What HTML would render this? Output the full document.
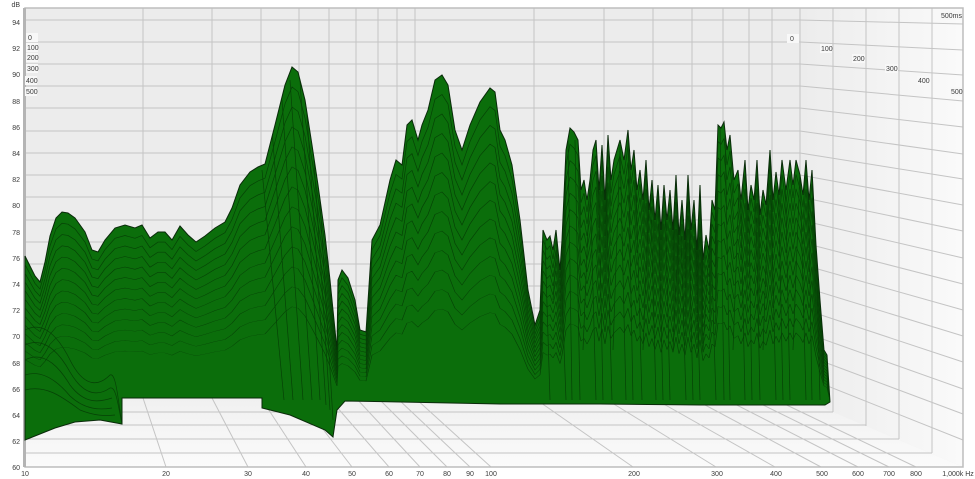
<!DOCTYPE html>
<html><head><meta charset="utf-8"><style>
html,body{margin:0;padding:0;background:#fff;width:975px;height:479px;overflow:hidden}
svg{display:block}
text{font-family:"Liberation Sans",sans-serif;font-size:7px;fill:#3a3a3a}
</style></head><body>
<svg width="975" height="479" viewBox="0 0 975 479" xmlns="http://www.w3.org/2000/svg">
<defs>
<linearGradient id="rw" x1="0" x2="1" y1="0" y2="0"><stop offset="0" stop-color="#ececec"/><stop offset="1" stop-color="#fafafa"/></linearGradient>
<linearGradient id="fl" x1="0" x2="0" y1="0" y2="1"><stop offset="0" stop-color="#f0f0f0"/><stop offset="1" stop-color="#fbfbfb"/></linearGradient>
<path id="top" d="M25,256 L30,266 35,276 40,282 45,262 50,236 56,218 62,212 68,213 75,218 85,232 92,250 98,252 105,240 115,228 125,225 135,228 142,225 150,238 158,232 165,232 172,240 180,226 188,235 196,242 205,236 215,228 225,222 232,208 240,185 250,172 258,167 265,164 275,125 285,85 292,67 298,72 305,100 312,145 318,185 325,235 330,280 335,330 337,350 338,280 342,270 348,278 355,300 360,330 366,332 372,240 380,225 390,180 396,160 402,165 407,125 412,120 418,140 422,125 428,110 435,80 442,75 448,85 455,130 462,150 470,125 480,102 490,88 495,92 500,130 505,140 512,165 520,220 528,290 535,325 540,310 543,230 547,240 550,236 553,250 556,230 560,270 562,240 566,150 570,128 574,132 578,140 581,190 584,180 587,200 590,180 593,150 596,140 599,190 602,145 605,200 608,135 611,180 614,160 617,150 620,140 624,160 628,130 631,170 634,150 637,190 640,170 643,200 646,160 649,210 652,180 655,220 658,185 661,230 664,185 667,220 670,190 673,230 676,175 679,235 682,200 685,240 688,175 691,230 694,200 697,250 700,185 703,260 706,235 709,250 712,200 715,210 718,125 721,128 724,122 727,150 730,135 734,180 738,170 741,200 745,160 748,210 751,185 754,200 757,160 760,215 763,190 766,205 770,150 773,200 776,172 779,195 782,160 786,190 790,160 793,185 796,160 800,175 803,195 806,160 809,200 812,170 816,245 820,300 824,350 827,355 830,402"/>
<clipPath id="gc"><path id="shape" d="M25,256 L30,266 35,276 40,282 45,262 50,236 56,218 62,212 68,213 75,218 85,232 92,250 98,252 105,240 115,228 125,225 135,228 142,225 150,238 158,232 165,232 172,240 180,226 188,235 196,242 205,236 215,228 225,222 232,208 240,185 250,172 258,167 265,164 275,125 285,85 292,67 298,72 305,100 312,145 318,185 325,235 330,280 335,330 337,350 338,280 342,270 348,278 355,300 360,330 366,332 372,240 380,225 390,180 396,160 402,165 407,125 412,120 418,140 422,125 428,110 435,80 442,75 448,85 455,130 462,150 470,125 480,102 490,88 495,92 500,130 505,140 512,165 520,220 528,290 535,325 540,310 543,230 547,240 550,236 553,250 556,230 560,270 562,240 566,150 570,128 574,132 578,140 581,190 584,180 587,200 590,180 593,150 596,140 599,190 602,145 605,200 608,135 611,180 614,160 617,150 620,140 624,160 628,130 631,170 634,150 637,190 640,170 643,200 646,160 649,210 652,180 655,220 658,185 661,230 664,185 667,220 670,190 673,230 676,175 679,235 682,200 685,240 688,175 691,230 694,200 697,250 700,185 703,260 706,235 709,250 712,200 715,210 718,125 721,128 724,122 727,150 730,135 734,180 738,170 741,200 745,160 748,210 751,185 754,200 757,160 760,215 763,190 766,205 770,150 773,200 776,172 779,195 782,160 786,190 790,160 793,185 796,160 800,175 803,195 806,160 809,200 812,170 816,245 820,300 824,350 827,355 830,402 825,405 700,405 600,404 540,404 500,404 400,402 345,401 337,410 333,437 325,430 290,415 262,408 262,398 215,398 160,398 122,398 122,424 100,420 75,422 55,428 40,434 25,440 Z"/></clipPath>
</defs>
<rect x="25" y="8" width="938" height="459" fill="#ececec"/>
<polygon points="800,8 963,8 963,467 800,398" fill="url(#rw)"/>
<polygon points="25,398 800,398 963,467 25,467" fill="url(#fl)"/>
<g stroke="#c4c4c4" stroke-width="1" fill="none">
<path d="M25,20H800M25,42H800M25,64H800M25,86H800M25,108H800M25,131H800M25,153H800M25,175H800M25,197H800M25,220H800M25,242H800M25,264H800M25,286H800M25,308H800M25,331H800M25,353H800M25,375H800M25,398H800"/>
<path d="M143,8V398M212,8V398M261,8V398M299,8V398M329,8V398M356,8V398M378,8V398M397,8V398M415,8V398M534,8V398M604,8V398M653,8V398M692,8V398M723,8V398M749,8V398M772,8V398M800,8V398"/>
<path d="M833,8V412M866,8V426M899,8V439M932,8V453"/>
<path d="M800,20L963,24M800,42L963,50M800,64L963,75M800,86L963,101M800,108L963,127M800,131L963,154M800,153L963,179M800,175L963,205M800,197L963,231M800,220L963,258M800,242L963,284M800,264L963,310M800,286L963,336M800,308L963,362M800,331L963,389M800,353L963,414M800,375L963,440"/>
<path d="M25,412H833M25,425H866M25,439H899M25,453H932"/>
<path d="M143,398L166,467M212,398L248,467M261,398L306,467M299,398L352,467M329,398L389,467M356,398L420,467M378,398L447,467M397,398L470,467M415,398L491,467M534,398L633,467M604,398L716,467M653,398L775,467M692,398L821,467M723,398L858,467M749,398L889,467M772,398L916,467"/>
</g>
<rect x="25" y="8" width="938" height="459" fill="none" stroke="#bdbdbd" stroke-width="1.5"/>
<rect x="23" y="8" width="3" height="459" fill="#b4b4b4"/>
<use href="#shape" fill="#0b6e0b" stroke="#0a2a0a" stroke-width="1"/>
<g clip-path="url(#gc)" fill="none" stroke="#063a06" stroke-width="0.7" opacity="0.85">
<use href="#top" transform="matrix(1,0,0,0.94,0,24)"/>
<use href="#top" transform="matrix(1,0,0,0.88,0,48)"/>
<use href="#top" transform="matrix(1,0,0,0.82,0,72)"/>
<use href="#top" transform="matrix(1,0,0,0.76,0,96)"/>
<use href="#top" transform="matrix(1,0,0,0.70,0,120)"/>
<use href="#top" transform="matrix(1,0,0,0.64,0,144)"/>
<use href="#top" transform="matrix(1,0,0,0.58,0,168)"/>
<use href="#top" transform="matrix(1,0,0,0.52,0,192)"/>
<use href="#top" transform="matrix(1,0,0,0.46,0,216)"/>
<use href="#top" transform="matrix(1,0,0,0.40,0,240)"/>
<use href="#top" transform="matrix(1,0,0,0.34,0,264)"/>
<use href="#top" transform="matrix(1,0,0,0.28,0,288)"/>
<path d="M25,330 C40,322 55,330 70,360 C85,390 100,385 110,375 C116,372 118,400 122,424"/>
<path d="M25,345 C40,338 55,345 70,372 C85,398 100,395 110,388 C116,386 118,405 122,424"/>
<path d="M25,360 C40,352 55,360 70,385 C85,405 100,402 112,398"/>
<path d="M25,375 C40,370 55,378 70,396 C85,410 100,410 112,408"/>
<path d="M25,390 C45,385 60,395 80,410 C95,416 105,416 115,415"/>
<path d="M300,80 L320,400 M306,100 L326,405 M312,130 L330,410 M318,170 L333,420 M290,80 L312,400 M282,100 L303,400 M272,130 L293,400 M262,170 L284,400"/>
<path d="M545,240 L550,400 M560,240 L566,400 M575,140 L580,400 M590,180 L596,400 M605,150 L612,400 M620,145 L626,400 M635,150 L642,400 M650,175 L656,400 M665,190 L670,400 M680,200 L686,400 M695,195 L700,400 M710,210 L716,400 M725,130 L730,400 M740,165 L745,400 M755,165 L760,400 M770,155 L776,400 M785,160 L790,400 M800,170 L806,400 M815,200 L820,400 M553,300 L560,200 M583,350 L590,180 M613,350 L620,150 M643,350 L650,170 M673,350 L680,200 M703,350 L712,200 M733,350 L740,160 M763,350 L770,150 M793,350 L800,170 M568,140 L572,400 M598,150 L603,400 M628,140 L633,400 M658,190 L663,400 M688,180 L693,400 M720,125 L724,400 M748,170 L752,400 M778,170 L783,400 M808,165 L812,400"/>
</g>
<g text-anchor="end">
<text x="20" y="7">dB</text>
<text x="20" y="25">94</text><text x="20" y="51">92</text><text x="20" y="77">90</text><text x="20" y="104">88</text><text x="20" y="130">86</text><text x="20" y="156">84</text><text x="20" y="182">82</text><text x="20" y="208">80</text><text x="20" y="235">78</text><text x="20" y="261">76</text><text x="20" y="287">74</text><text x="20" y="313">72</text><text x="20" y="339">70</text><text x="20" y="366">68</text><text x="20" y="392">66</text><text x="20" y="418">64</text><text x="20" y="444">62</text><text x="20" y="470">60</text>
</g>
<g text-anchor="middle">
<text x="25" y="476">10</text><text x="166" y="476">20</text><text x="248" y="476">30</text><text x="306" y="476">40</text><text x="352" y="476">50</text><text x="389" y="476">60</text><text x="420" y="476">70</text><text x="447" y="476">80</text><text x="470" y="476">90</text><text x="491" y="476">100</text><text x="634" y="476">200</text><text x="717" y="476">300</text><text x="776" y="476">400</text><text x="822" y="476">500</text><text x="858" y="476">600</text><text x="889" y="476">700</text><text x="916" y="476">800</text><text x="958" y="476">1,000k Hz</text>
</g>
<g>
<rect x="26" y="33" width="12" height="9" fill="#f8f8f8"/><text x="28" y="40">0</text>
<rect x="26" y="43" width="12" height="9" fill="#f8f8f8"/><text x="27" y="50">100</text>
<rect x="26" y="53" width="12" height="9" fill="#f8f8f8"/><text x="27" y="60">200</text>
<rect x="26" y="64" width="12" height="9" fill="#f8f8f8"/><text x="27" y="71">300</text>
<rect x="25" y="76" width="12" height="9" fill="#f8f8f8"/><text x="26" y="83">400</text>
<rect x="25" y="87" width="12" height="9" fill="#f8f8f8"/><text x="26" y="94">500</text>
<rect x="787" y="34" width="12" height="9" fill="#f8f8f8"/><text x="790" y="41">0</text>
<rect x="820" y="44" width="12" height="9" fill="#f8f8f8"/><text x="821" y="51">100</text>
<rect x="852" y="54" width="13" height="9" fill="#f8f8f8"/><text x="853" y="61">200</text>
<rect x="885" y="64" width="13" height="9" fill="#f8f8f8"/><text x="886" y="71">300</text>
<rect x="917" y="76" width="13" height="9" fill="#f8f8f8"/><text x="918" y="83">400</text>
<rect x="950" y="87" width="12" height="9" fill="#f8f8f8"/><text x="951" y="94">500</text>
<rect x="940" y="11" width="22" height="9" fill="#f8f8f8"/><text x="941" y="18">500ms</text>
</g>
</svg>
</body></html>
